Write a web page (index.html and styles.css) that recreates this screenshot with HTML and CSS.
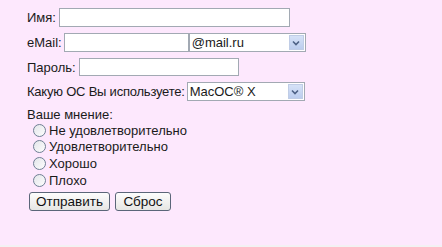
FILE: index.html
```html
<!DOCTYPE html>
<html lang="ru">
  <head>
    <meta charset="UTF-8" />
    <title>Анкета</title>
    <link rel="stylesheet" href="styles.css">
  </head>
  <body>
    <form class="survey" autocomplete="off">
      <div class="row">
        <label for="name">Имя:</label>
        <input type="text" id="name" class="field field-name" />
      </div>
      <div class="row">
        <label for="email">eMail:</label>
        <input type="text" id="email" class="field field-email" />
        <div class="select-wrap select-domain">
          <select class="select">
            <option>@mail.ru</option>
            <option>@list.ru</option>
            <option>@bk.ru</option>
          </select>
          <span class="select-arrow">
            <svg width="8" height="6" viewBox="0 0 8 6"><path d="M1 1.5 L4 4.5 L7 1.5" fill="none" stroke="#4d6185" stroke-width="1.6"/></svg>
          </span>
        </div>
      </div>
      <div class="row row-short">
        <label for="pass">Пароль:</label>
        <input type="password" id="pass" class="field field-pass" />
      </div>
      <div class="row">
        <label for="os" class="label-long">Какую ОС Вы используете:</label>
        <div class="select-wrap select-os">
          <select id="os" class="select">
            <option>MacOC® X</option>
            <option>Windows</option>
            <option>Linux</option>
          </select>
          <span class="select-arrow">
            <svg width="8" height="6" viewBox="0 0 8 6"><path d="M1 1.5 L4 4.5 L7 1.5" fill="none" stroke="#4d6185" stroke-width="1.6"/></svg>
          </span>
        </div>
      </div>
      <div class="opinion-title">Ваше мнение:</div>
      <div class="opinion">
        <label class="choice"><input type="radio" name="op" />Не удовлетворительно</label>
        <label class="choice"><input type="radio" name="op" />Удовлетворительно</label>
        <label class="choice"><input type="radio" name="op" />Хорошо</label>
        <label class="choice"><input type="radio" name="op" />Плохо</label>
      </div>
      <div class="buttons">
        <button type="submit" class="btn btn-submit">Отправить</button>
        <button type="reset" class="btn btn-reset">Сброс</button>
      </div>
    </form>
  </body>
</html>
```

FILE: styles.css
```css
* {
  box-sizing: border-box;
}
body {
  margin: 0;
  height: 247px;
  background: #fde8fd;
  border-bottom: 2px solid #f3f1f3;
  font-family: "Liberation Sans", Arial, sans-serif;
  font-size: 13px;
  color: #1a1a1a;
}
.survey {
  padding: 8px 0 0 27px;
}
.row {
  display: flex;
  align-items: center;
  height: 19px;
  margin-bottom: 6px;
}
.row label {
  margin-right: 3px;
}
.row .label-long {
  letter-spacing: -0.22px;
  margin-right: 2px;
}
.row-short {
  height: 18px;
}
.field {
  height: 100%;
  border: 1px solid #a2a9b3;
  background: #fff;
  font-family: inherit;
  font-size: 13px;
  padding: 0 3px;
  outline: none;
}
.field-name {
  width: 231px;
}
.field-email {
  width: 125px;
  margin-left: -1px;
}
.field-pass {
  width: 160px;
}
.select-wrap {
  position: relative;
  height: 100%;
}
.select {
  -webkit-appearance: none;
  appearance: none;
  width: 100%;
  height: 100%;
  border: 1px solid #a2a9b3;
  background: #fff;
  font-family: inherit;
  font-size: 13px;
  color: #1a1a1a;
  padding: 0 2px;
  border-radius: 0;
  outline: none;
}
.select-domain {
  width: 117px;
}
.select-os {
  width: 118px;
}
.select-arrow {
  position: absolute;
  top: 2px;
  right: 2px;
  bottom: 2px;
  width: 15px;
  background: linear-gradient(#d6e2f7, #bccdee);
  border: 1px solid #c0cde6;
  display: flex;
  align-items: center;
  justify-content: center;
  pointer-events: none;
}
.opinion-title {
  line-height: 15px;
  margin-top: 5px;
}
.opinion {
  display: flex;
  flex-direction: column;
}
.choice {
  display: flex;
  align-items: center;
  height: 16.6px;
  padding-left: 6px;
}
.choice input {
  -webkit-appearance: none;
  appearance: none;
  width: 13px;
  height: 13px;
  margin: 0 3px 0 0;
  border: 1px solid #6f7f94;
  border-radius: 50%;
  background: linear-gradient(135deg, #e3e6ea, #fdfdfd);
}
.buttons {
  display: flex;
  gap: 5px;
  margin-top: 4px;
  padding-left: 2px;
}
.btn {
  height: 19px;
  padding: 0;
  border: 1px solid #5b6679;
  border-radius: 3px;
  background: linear-gradient(#fdfdfd, #e6e6e3);
  font-family: inherit;
  font-size: 13.5px;
  color: #111;
  line-height: 17px;
  text-align: center;
}
.btn-submit {
  width: 81px;
}
.btn-reset {
  width: 56px;
}
```
